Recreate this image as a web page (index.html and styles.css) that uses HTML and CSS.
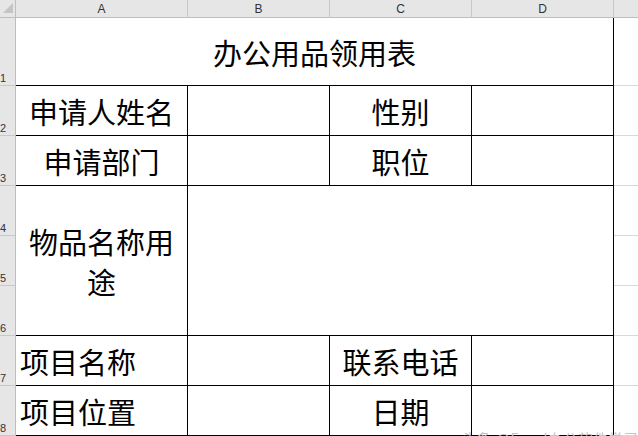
FILE: index.html
```html
<!DOCTYPE html>
<html lang="zh">
<head>
<meta charset="utf-8">
<title>办公用品领用表</title>
<link rel="stylesheet" href="styles.css">
</head>
<body>
<div class="sheet">
  <div class="corner"><span class="tri"></span></div>
  <div class="ch">A</div>
  <div class="ch">B</div>
  <div class="ch">C</div>
  <div class="ch">D</div>
  <div class="ch ch-e"></div>

  <div class="rh"><span>1</span></div>
  <div class="cell title span4">办公用品领用表</div>
  <div class="ex"></div>

  <div class="rh"><span>2</span></div>
  <div class="cell">申请人姓名</div>
  <div class="cell"></div>
  <div class="cell">性别</div>
  <div class="cell"></div>
  <div class="ex"></div>

  <div class="rh"><span>3</span></div>
  <div class="cell">申请部门</div>
  <div class="cell"></div>
  <div class="cell">职位</div>
  <div class="cell"></div>
  <div class="ex"></div>

  <div class="rh"><span>4</span></div>
  <div class="cell wrap rows3">物品名称用途</div>
  <div class="cell rows3 span3"></div>
  <div class="ex"></div>

  <div class="rh"><span>5</span></div>
  <div class="ex"></div>

  <div class="rh"><span>6</span></div>
  <div class="ex"></div>

  <div class="rh"><span>7</span></div>
  <div class="cell left">项目名称</div>
  <div class="cell"></div>
  <div class="cell">联系电话</div>
  <div class="cell"></div>
  <div class="ex"></div>

  <div class="rh"><span>8</span></div>
  <div class="cell left">项目位置</div>
  <div class="cell"></div>
  <div class="cell">日期</div>
  <div class="cell"></div>
  <div class="ex"></div>

  <div class="watermark">头条 @Excel办公软件学习</div>
</div>
</body>
</html>
```

FILE: styles.css
```css
html, body {
  margin: 0;
  padding: 0;
  background: #fff;
}

.sheet {
  position: relative;
  width: 638px;
  height: 436px;
  overflow: hidden;
  display: grid;
  grid-template-columns: 16px 172px 142px 142px 142px 1fr;
  grid-template-rows: 18px 68px 50px 50px 50px 50px 50px 50px 50px;
  font-family: "Noto Sans CJK SC", "Noto Sans", sans-serif;
}

.corner {
  background: #e6e6e6;
  border-right: 1px solid #bdbdbd;
  border-bottom: 1px solid #bdbdbd;
  position: relative;
}

.tri {
  position: absolute;
  left: 3px;
  top: 3px;
  width: 0;
  height: 0;
  border-left: 10px solid transparent;
  border-bottom: 10px solid #c4c4c4;
}

.ch {
  background: #e6e6e6;
  border-right: 1px solid #c8c8c8;
  border-bottom: 1px solid #bdbdbd;
  font-family: "Liberation Sans", Arial, sans-serif;
  font-size: 12px;
  color: #333;
  display: flex;
  align-items: center;
  justify-content: center;
  padding-top: 1px;
}

.ch-e {
  border-right: none;
}

.rh {
  background: #e6e6e6;
  border-right: 1px solid #bdbdbd;
  border-bottom: 1px solid #c8c8c8;
  font-family: "Liberation Sans", Arial, sans-serif;
  font-size: 11px;
  color: #333;
  display: flex;
  align-items: flex-end;
  overflow: hidden;
}

.rh span {
  margin-left: 0;
  margin-bottom: 1px;
  line-height: 12px;
}

.ex {
  border-bottom: 1px solid #d9d9d9;
}

.cell {
  border-right: 1px solid #000;
  border-bottom: 1px solid #000;
  font-size: 29px;
  color: #000;
  display: flex;
  align-items: center;
  justify-content: center;
  text-align: center;
  line-height: 40px;
  white-space: nowrap;
}

.cell.title {
  font-size: 29px;
  padding-top: 1px;
}

.cell.left {
  justify-content: flex-start;
  padding-left: 4px;
}

.cell.wrap {
  white-space: normal;
  padding: 0 10px;
}

.span4 {
  grid-column: span 4;
}

.span3 {
  grid-column: span 3;
}

.rows3 {
  grid-row: span 3;
}

.watermark {
  position: absolute;
  left: 462px;
  top: 428px;
  font-size: 14px;
  color: #c4c4c4;
  white-space: nowrap;
  letter-spacing: 1px;
}
```
